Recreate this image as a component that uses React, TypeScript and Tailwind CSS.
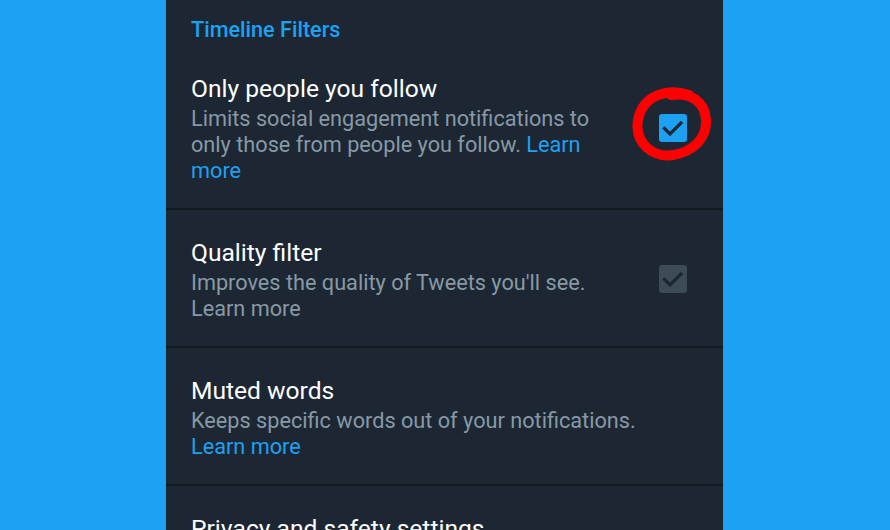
import React from "react";

const font = { fontFamily: "Roboto, 'Noto Sans', sans-serif" };

function Check({ active }: { active: boolean }) {
  return (
    <div
      className={
        "w-[28px] h-[28px] rounded-[3px] flex items-center justify-center shrink-0 " +
        (active ? "bg-[#1da1f2]" : "bg-[#3d4b59]")
      }
    >
      <svg width="28" height="28" viewBox="0 0 28 28">
        <polyline
          points="5.5,14.5 11,20 22,9"
          fill="none"
          stroke="#1c2733"
          strokeWidth="3.2"
          strokeLinecap="square"
        />
      </svg>
    </div>
  );
}

function Row({
  title,
  children,
  check,
}: {
  title: string;
  children?: React.ReactNode;
  check?: React.ReactNode;
}) {
  return (
    <div className="flex items-center border-b-2 border-[#111921] pl-[25px] pr-[36px] pt-[26px] pb-[24px]">
      <div className="flex-1 whitespace-nowrap">
        <div className="text-[24.6px] leading-[34px] text-white">{title}</div>
        {children && (
          <div className="text-[21.7px] leading-[26px] text-[#8899a6]">{children}</div>
        )}
      </div>
      {check}
    </div>
  );
}

export default function App() {
  return (
    <div className="w-[890px] h-[530px] bg-[#1da1f2] flex overflow-hidden" style={font}>
      <div className="ml-[166px] w-[557px] h-full bg-[#1c2733] flex flex-col relative">
        <div className="pl-[25px] pt-[16px] h-[45.5px] text-[21.6px] leading-[28px] font-medium text-[#1da1f2] shrink-0">
          Timeline Filters
        </div>
        <Row
          title="Only people you follow"
          check={
            <div className="relative">
              <Check active />
              <svg
                className="absolute left-[-30px] top-[-28px] pointer-events-none"
                width="90"
                height="84"
                viewBox="0 0 90 84"
              >
                <path
                  d="M 60 9 C 40 2, 14 8, 9 34 C 5 58, 25 72, 44 69 C 64 66, 78 52, 77 34 C 76 16, 62 6, 42 9"
                  fill="none"
                  stroke="#ff0000"
                  strokeWidth="10"
                  strokeLinecap="round"
                />
              </svg>
            </div>
          }
        >
          Limits social engagement notifications to
          <br />
          only those from people you follow. <span className="text-[#1da1f2]">Learn</span>
          <br />
          <span className="text-[#1da1f2]">more</span>
        </Row>
        <Row title="Quality filter" check={<Check active={false} />}>
          Improves the quality of Tweets you'll see.
          <br />
          Learn more
        </Row>
        <Row title="Muted words">
          Keeps specific words out of your notifications.
          <br />
          <span className="text-[#1da1f2]">Learn more</span>
        </Row>
        <Row title="Privacy and safety settings" />
      </div>
    </div>
  );
}
